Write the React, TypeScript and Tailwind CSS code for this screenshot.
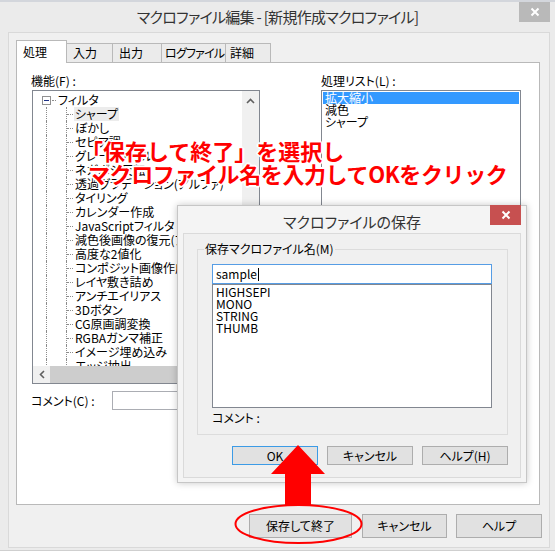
const treeItems = [
  'シャープ',
  'ぼかし',
  'セピア調',
  'グレースケール',
  'ネガポジ反転',
  '透過グラデーション(アルファ)',
  'タイリング',
  'カレンダー作成',
  'JavaScriptフィルタ',
  '減色後画像の復元(アルファ)',
  '高度な2値化',
  'コンポジット画像作成',
  'レイヤ敷き詰め',
  'アンチエイリアス',
  '3Dボタン',
  'CG原画調変換',
  'RGBAガンマ補正',
  'イメージ埋め込み',
  'エッジ抽出',
  '輪郭抽出',
]

const macroFiles = ['HIGHSEPI', 'MONO', 'STRING', 'THUMB']

function CloseGlyph() {
  return (
    <svg width="10" height="10" viewBox="0 0 10 10" fill="none" stroke="#fff" strokeWidth="2">
      <path d="M1.5 1.5l7 7M8.5 1.5l-7 7" />
    </svg>
  )
}

function WinButton({ children, width, focused }: { children: string; width: string; focused?: boolean }) {
  return (
    <div
      className={`flex items-center justify-center border bg-[#e1e1e1] ${width} ${
        focused ? 'border-[#3c9be6]' : 'border-[#adadad]'
      }`}
    >
      {children}
    </div>
  )
}

function Tree() {
  return (
    <div className="ml-px flex h-[294px] w-[228px] flex-col border border-[#828790] bg-white">
      <div className="flex min-h-0 flex-1">
        <div className="min-w-0 flex-1 overflow-hidden pt-[2px] whitespace-nowrap">
          <div className="flex h-[14px] items-center">
            <div className="ml-[9px] flex h-[9px] w-[9px] items-center justify-center border border-[#919191]">
              <div className="h-px w-[5px] bg-[#1e3287]" />
            </div>
            <div className="ml-px w-[4px] border-t border-dotted border-[#8c8c8c]" />
            <span className="ml-[2px]">フィルタ</span>
          </div>
          {treeItems.map((item, i) => (
            <div key={item} className="flex h-[14px]">
              <div className="w-[13px] shrink-0" />
              <div className="w-[20px] shrink-0 border-l border-dotted border-[#8c8c8c]" />
              <div className="flex w-[8px] shrink-0 items-center border-l border-dotted border-[#8c8c8c]">
                <div className="w-[6px] border-t border-dotted border-[#8c8c8c]" />
              </div>
              <span className={`px-px leading-[14px] ${i === 0 ? 'bg-[#ececec]' : ''}`}>{item}</span>
            </div>
          ))}
        </div>
        <div className="flex w-[17px] shrink-0 justify-center bg-[#f0f0f0] pt-[7px]">
          <svg width="9" height="6" viewBox="0 0 9 6" fill="none" stroke="#606060" strokeWidth="1.6">
            <path d="M1 5l3.5-3.5L8 5" />
          </svg>
        </div>
      </div>
      <div className="flex h-[17px] shrink-0 bg-[#f0f0f0]">
        <div className="flex w-[17px] items-center justify-center">
          <svg width="6" height="9" viewBox="0 0 6 9" fill="none" stroke="#606060" strokeWidth="1.6">
            <path d="M5 1L1.5 4.5 5 8" />
          </svg>
        </div>
        <div className="flex-1 bg-[#cdcdcd]" />
        <div className="w-[17px]" />
      </div>
    </div>
  )
}

function SaveDialog() {
  return (
    <div className="absolute top-[205px] left-[177px] flex h-[278px] w-[350px] flex-col border border-[#c6c6c6] bg-[#f4f4f4] shadow-[0_0_7px_rgba(0,0,0,0.22)]">
      <div className="grid h-[27px] shrink-0 grid-cols-[1fr_auto_1fr]">
        <div />
        <div className="pt-[6px] text-[15px] leading-[20px] text-[#333]">マクロファイルの保存</div>
        <div className="flex justify-end pr-[5px]">
          <div className="-mt-px flex h-[20px] w-[31px] items-center justify-center bg-[#c75050]">
            <CloseGlyph />
          </div>
        </div>
      </div>
      <div className="mx-[5px] flex h-[245px] flex-col border border-[#dadada] bg-[#f0f0f0] pt-[15px] pl-[13px]">
        <div className="relative h-[186px] w-[311px] border border-[#dcdcdc] pt-[14px] pl-[14px]">
          <span className="absolute -top-[8px] left-[6px] bg-[#f0f0f0] px-[1px] leading-[14px]">
            保存マクロファイル名(M)
          </span>
          <div className="flex h-[20px] w-[280px] items-center border border-[#569de5] bg-white pl-[3px]">
            <span className="leading-[14px]">sample</span>
            <span className="ml-px h-[13px] w-px bg-black" />
          </div>
          <div className="h-[124px] w-[280px] border border-[#828790] bg-white pt-px pl-[3px]">
            {macroFiles.map((f) => (
              <div key={f} className="leading-[12px]">
                {f}
              </div>
            ))}
          </div>
          <div className="mt-[3px] leading-[14px]">コメント :</div>
        </div>
        <div className="mt-[11px] flex h-[19px] w-[311px] justify-end gap-[9px]">
          <WinButton width="w-[86px]" focused>
            OK
          </WinButton>
          <WinButton width="w-[86px]">キャンセル</WinButton>
          <WinButton width="w-[86px]">ヘルプ(H)</WinButton>
        </div>
      </div>
    </div>
  )
}

export default function App() {
  return (
    <div className="relative flex h-[557px] w-[555px] flex-col overflow-hidden bg-[#ebebeb] text-[12px] leading-[14px] text-black [font-family:'Noto_Sans_CJK_JP','Liberation_Sans',sans-serif] [font-feature-settings:'palt']">
      {/* title bar */}
      <div className="grid h-[32px] shrink-0 grid-cols-[1fr_auto_1fr] border-t-2 border-[#d3d6dc]">
        <div />
        <div className="pt-[5px] text-[15px] leading-[20px] tracking-[-0.7px] whitespace-nowrap text-[#333]">
          マクロファイル編集 - [新規作成マクロファイル]
        </div>
        <div className="flex justify-end pr-[5px]">
          <div className="flex h-[20px] w-[31px] items-center justify-center bg-[#b9b9b9]">
            <CloseGlyph />
          </div>
        </div>
      </div>

      {/* client area */}
      <div className="ml-[8px] flex h-[516px] w-[542px] shrink-0 flex-col border border-[#d9d9d9] bg-[#f0f0f0] pt-[7px] pl-[7px]">
        <div className="flex h-[22px] items-end whitespace-nowrap">
          <div className="relative z-10 -mb-px h-[23px] w-[51px] border-x border-t border-[#b9b9b9] bg-white pt-[4px] pl-[6px]">
            処理
          </div>
          <div className="h-[19px] w-[46px] border-t border-r border-[#b9b9b9] bg-[#ebebeb] pt-[2px] pl-[6px]">入力</div>
          <div className="h-[19px] w-[49px] border-t border-r border-[#b9b9b9] bg-[#ebebeb] pt-[2px] pl-[6px]">出力</div>
          <div className="h-[19px] w-[64px] overflow-hidden border-t border-r border-[#b9b9b9] bg-[#ebebeb] pt-[2px] pl-[3px] tracking-[-0.8px]">
            ログファイル
          </div>
          <div className="h-[19px] w-[45px] border-t border-r border-[#b9b9b9] bg-[#ebebeb] pt-[2px] pl-[4px]">詳細</div>
        </div>

        <div className="h-[443px] w-[524px] border border-[#b9b9b9] bg-white pt-[11px] pl-[14px]">
          <div className="flex">
            <div className="flex flex-col">
              <div className="mb-[2px]">機能(F) :</div>
              <Tree />
            </div>
            <div className="ml-[61px] flex flex-col">
              <div className="mb-[2px]">処理リスト(L) :</div>
              <div className="h-[294px] w-[200px] border border-[#828790] bg-white pt-px">
                <div className="mx-px bg-[#3399ff] pl-[2px] leading-[12px] text-white">拡大縮小</div>
                <div className="pl-[3px] leading-[12px]">減色</div>
                <div className="pl-[3px] leading-[12px]">シャープ</div>
              </div>
            </div>
          </div>
          <div className="mt-[7px] flex items-center">
            <span className="w-[81px]">コメント(C) :</span>
            <div className="h-[19px] w-[409px] border border-[#abadb3] bg-white" />
          </div>
        </div>

        <div className="mt-[9px] flex h-[24px] justify-end pr-[7px]">
          <WinButton width="w-[103px]">保存して終了</WinButton>
          <div className="w-[10px]" />
          <WinButton width="w-[85px]">キャンセル</WinButton>
          <div className="w-[9px]" />
          <WinButton width="w-[86px]">ヘルプ</WinButton>
        </div>
      </div>

      <div className="mt-[2px] h-[7px] border-t border-[#cfcfcf] bg-white" />

      <SaveDialog />

      {/* annotation */}
      <div className="absolute top-[139px] left-[81px] text-[22px] leading-[23px] font-bold whitespace-nowrap text-[#ff0000] [font-feature-settings:normal] [text-shadow:1px_1px_0_#fff,-1px_-1px_0_#fff,1px_-1px_0_#fff,-1px_1px_0_#fff,0_2px_0_#fff,2px_0_0_#fff,0_-2px_0_#fff,-2px_0_0_#fff]">
        <div>「保存して終了」を選択し</div>
        <div className="pl-[7px] tracking-[-0.4px]">マクロファイル名を入力してOKをクリック</div>
      </div>
      <svg className="pointer-events-none absolute top-0 left-0" width="555" height="557">
        <polygon points="298,445 325,474 311,474 311,505 285,505 285,474 271,474" fill="#ff0000" />
        <ellipse cx="298.5" cy="524" rx="63" ry="19" fill="none" stroke="#ff0000" strokeWidth="2" />
      </svg>
    </div>
  )
}
